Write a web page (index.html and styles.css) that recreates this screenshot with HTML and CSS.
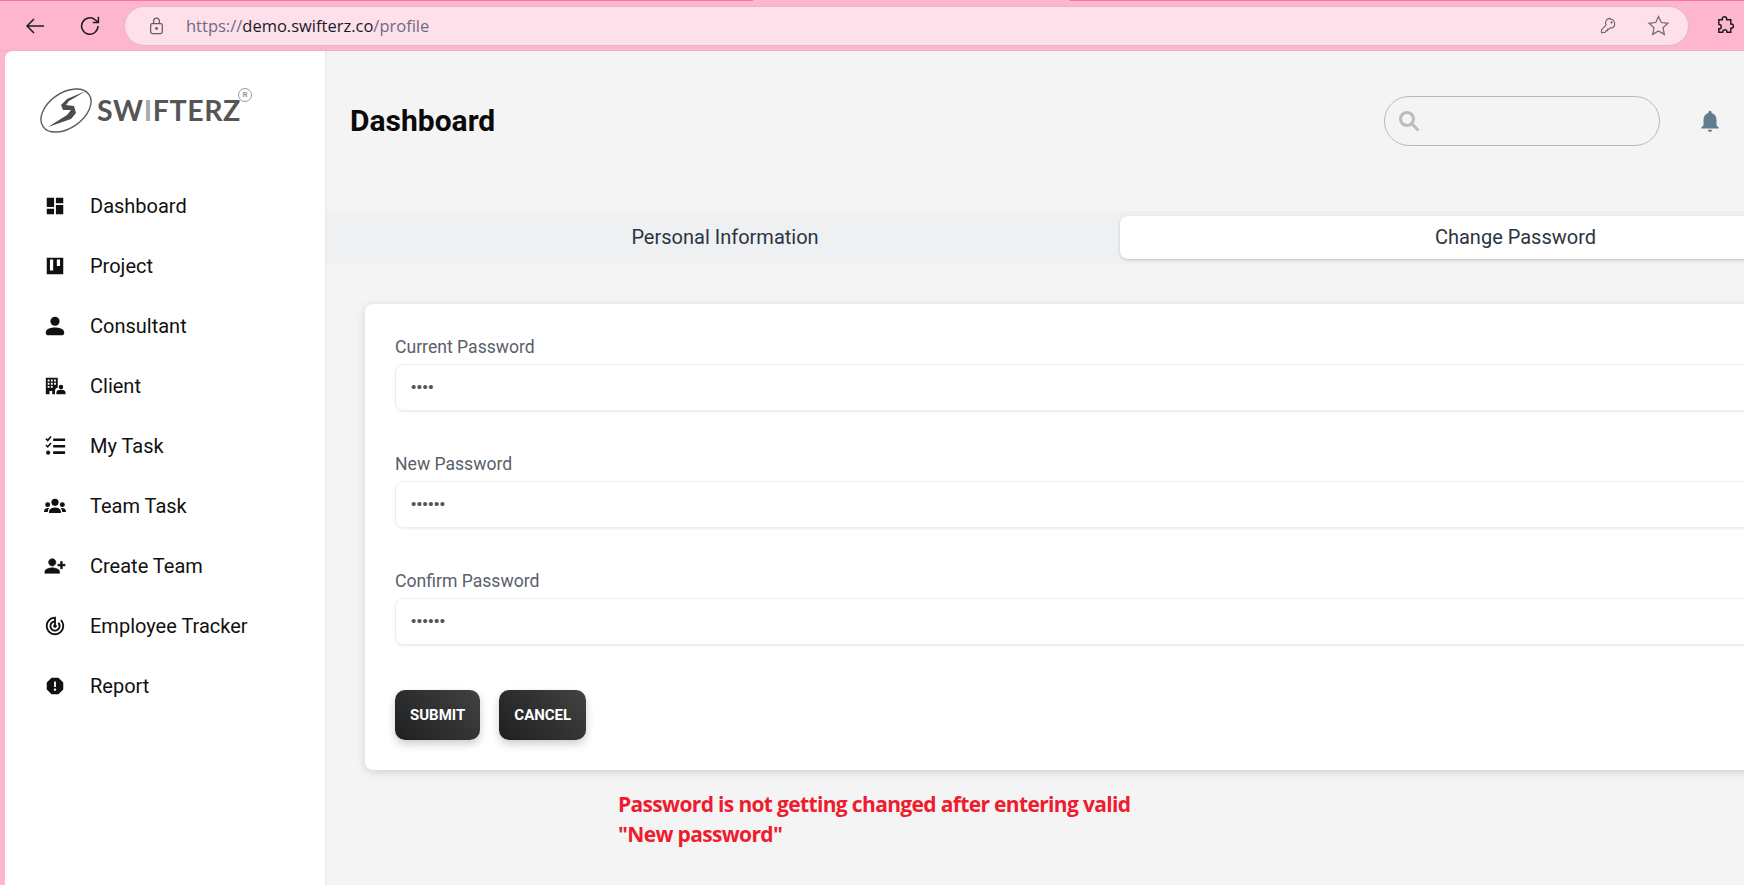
FILE: index.html
```html
<!DOCTYPE html>
<html lang="en">
<head>
    <meta charset="UTF-8">
    <meta name="viewport" content="width=device-width, initial-scale=1.0">
    <title>Swifterz - Profile</title>
    <link rel="stylesheet" href="styles.css">
</head>
<body>
    <!-- Browser toolbar -->
    <div class="browser-bar">
        <svg class="tool-icon back-icon" viewBox="0 0 24 24"><path d="M21 12H4M11 5l-7 7 7 7"/></svg>
        <svg class="tool-icon reload-icon" viewBox="0 0 24 24"><path d="M20 12a8.2 8.2 0 1 1-2.6-6L20 8.2M20.4 2.8v5.6h-5.6"/></svg>
        <div class="url-bar">
            <svg class="lock-icon" viewBox="0 0 18 22"><rect x="2" y="8" width="14" height="12" rx="2"/><path d="M5.5 8V5a3.5 3.5 0 0 1 7 0v3"/><circle cx="9" cy="14" r="1"/></svg>
            <span class="url-text">https://<b>demo.swifterz.co</b>/profile</span>
            <svg class="url-icon key-icon" viewBox="0 0 20 20"><path d="M12.5 2.5a5 5 0 0 1 1.6 9.7l-1.6-.2-1.4 1.5H9.5v1.6H8l-1 1.9-4.2.6.1-3.5 5-5.2a5 5 0 0 1 4.6-7.4z"/><circle cx="14" cy="6" r=".6"/></svg>
            <svg class="url-icon star-icon" viewBox="0 0 24 24"><path d="M12 2.5l2.9 6.4 7 .8-5.2 4.7 1.4 6.9-6.1-3.5-6.1 3.5 1.4-6.9-5.2-4.7 7-.8z"/></svg>
        </div>
        <svg class="tool-icon puzzle-icon" viewBox="0 0 24 24"><path d="M9.5 4.5a2.5 2.5 0 0 1 5 0v.8h4.7v4.9h.5a2.5 2.5 0 0 1 0 5h-.5v4.5h-4.5v-.5a2.3 2.3 0 0 0-4.6 0v.5H5.5v-3.9h.3a2.5 2.5 0 0 0 0-5h-.3V5.3h4z"/></svg>
    </div>

    <div class="app">
        <aside class="sidebar">
            <div class="logo">
                <svg class="logo-mark" viewBox="-1 -1 52 45">
                    <ellipse cx="25" cy="21.5" rx="28" ry="17.5" transform="rotate(-35 25 21.5)"/>
                    <path class="logo-bolt" d="M45 2L26 10 20 16 22 21 30 21 26 26 7 38 30 30 35 24 33 17 25 16 28 12z"/>
                </svg>
                <span class="logo-name">SW<i>I</i>FTERZ</span>
                <span class="logo-reg">R</span>
            </div>
            <nav class="menu">
                <a class="menu-item"><svg viewBox="0 0 24 24"><path d="M3 13h8V3H3v10zm0 8h8v-6H3v6zm10 0h8V11h-8v10zm0-18v6h8V3h-8z"/></svg>Dashboard</a>
                <a class="menu-item"><svg viewBox="0 0 24 24"><path fill-rule="evenodd" d="M3 3h18v18H3zM6.5 5v12H10V5zM14 5v7h3.5V5z"/></svg>Project</a>
                <a class="menu-item"><svg viewBox="0 0 24 24"><circle cx="12" cy="6.8" r="5"/><path d="M2 20v-1.5c0-3.8 6.5-5 10-5s10 1.2 10 5V20c0 1.2-.8 2-2 2H4c-1.200 0-2-.8-2-2z"/></svg>Consultant</a>
                <a class="menu-item"><svg viewBox="0 0 24 24"><path fill-rule="evenodd" d="M2 3h13v10.500c-2 .5-3 2-3 3.500v4H9v-3.500H6V21H2zM4 5v2h2V5zM7.500 5v2h2V5zM11 5v2h2V5zM4 8.500v2h2v-2zM7.500 8.500v2h2v-2zM11 8.500v2h2v-2zM4 12v2h2v-2zM7.500 12v2h2v-2z"/><circle cx="18.500" cy="13" r="2.500"/><path d="M13.500 21v-2c0-2 3-2.800 5-2.800s5 .8 5 2.800v2z"/></svg>Client</a>
                <a class="menu-item"><svg viewBox="0 0 24 24"><path d="M10 3.800h13v2.800H10zM10 10.800h13v2.800H10zM10 17.800h13v2.800H10z"/><path d="M1.500 4.500l1.300-1.100 1.200 1.300L7 1.200l1.300 1.100-4.200 5zM1.500 11.500l1.300-1.100 1.200 1.300L7 8.200l1.300 1.100-4.200 5z"/><circle cx="4.500" cy="19.300" r="2.300"/></svg>My Task</a>
                <a class="menu-item"><svg viewBox="0 0 24 24"><circle cx="12" cy="8" r="3.900"/><circle cx="4" cy="10.500" r="2.700"/><circle cx="20" cy="10.500" r="2.700"/><path d="M5.500 19.500v-1.300c0-3 3.500-4.500 6.500-4.500s6.500 1.500 6.500 4.500v1.300z"/><path d="M0 18.500v-.8c0-2 2-3.500 4-3.500.6 0 1.200.1 1.700.3-1 1-1.500 2.200-1.500 3.600v.4zM24 18.500v-.8c0-2-2-3.500-4-3.500-.6 0-1.200.1-1.700.3 1 1 1.500 2.200 1.500 3.600v.4z"/></svg>Team Task</a>
                <a class="menu-item"><svg class="heavy" viewBox="0 0 24 24"><path d="M9 12c2.210 0 4-1.790 4-4s-1.790-4-4-4-4 1.790-4 4 1.790 4 4 4zm9-2V7h2v3h3v2h-3v3h-2v-3h-3v-2h3zM9 14c-2.670 0-8 1.340-8 4v2h16v-2c0-2.660-5.330-4-8-4z"/></svg>Create Team</a>
                <a class="menu-item"><svg viewBox="0 0 24 24"><path d="M19.070 4.930l-1.410 1.410C19.100 7.790 20 9.790 20 12c0 4.420-3.580 8-8 8s-8-3.580-8-8c0-4.080 3.050-7.440 7-7.930v2.020C8.160 6.570 6 9.030 6 12c0 3.310 2.690 6 6 6s6-2.690 6-6c0-1.660-.670-3.160-1.760-4.240l-1.410 1.410C15.550 9.900 16 10.900 16 12c0 2.210-1.790 4-4 4s-4-1.790-4-4c0-1.860 1.280-3.410 3-3.860v2.140c-.6.350-1 .980-1 1.720 0 1.100.9 2 2 2s2-.9 2-2c0-.740-.4-1.380-1-1.720V2h-1C6.480 2 2 6.480 2 12s4.480 10 10 10 10-4.480 10-10c0-2.760-1.120-5.260-2.930-7.070z"/></svg>Employee Tracker</a>
                <a class="menu-item"><svg viewBox="0 0 24 24"><path d="M15.730 3H8.270L3 8.270v7.460L8.270 21h7.460L21 15.730V8.270L15.730 3zM12 17.300c-.720 0-1.300-.580-1.300-1.300 0-.720.580-1.300 1.300-1.300.720 0 1.300.580 1.300 1.300 0 .720-.580 1.300-1.300 1.300zm1-4.300h-2V7h2v6z"/></svg>Report</a>
            </nav>
        </aside>

        <main class="content">
            <header class="top-row">
                <h1>Dashboard</h1>
                <div class="search-box">
                    <svg viewBox="0 0 24 24"><circle cx="10" cy="10" r="6.500"/><path d="M15 15l6.500 6.500"/></svg>
                </div>
                <svg class="bell" viewBox="0 0 24 24"><path d="M12 22c1.100 0 2-.9 2-2h-4c0 1.100.9 2 2 2zm6-6v-5c0-3.070-1.630-5.640-4.500-6.320V4c0-.830-.670-1.500-1.500-1.500s-1.500.670-1.500 1.500v.680C7.640 5.360 6 7.920 6 11v5l-2 2v1h16v-1l-2-2z"/></svg>
            </header>

            <div class="tabs">
                <div class="tab first">Personal Information</div>
                <div class="tab active">Change Password</div>
            </div>

            <form class="card">
                <div class="field">
                    <label>Current Password</label>
                    <div class="pass-input">••••</div>
                </div>
                <div class="field">
                    <label>New Password</label>
                    <div class="pass-input">••••••</div>
                </div>
                <div class="field">
                    <label>Confirm Password</label>
                    <div class="pass-input">••••••</div>
                </div>
                <div class="buttons">
                    <button type="button">SUBMIT</button>
                    <button type="button">CANCEL</button>
                </div>
            </form>

            <p class="note">Password is not getting changed after entering valid<br>"New password"</p>
        </main>
    </div>
</body>
</html>
```
FILE: styles.css
```css
* {
    margin: 0;
    padding: 0;
    box-sizing: border-box;
    font-family: 'Roboto', sans-serif;
}

html, body {
    height: 100%;
    overflow: hidden;
}

body {
    background: #feb6ce;
    display: flex;
    flex-direction: column;
}

/* Browser toolbar */
.browser-bar {
    height: 51px;
    flex-shrink: 0;
    display: flex;
    align-items: center;
    background: linear-gradient(to right, #fd72a3 753px, transparent 753px, transparent 1070px, #fd72a3 1070px) no-repeat top / 100% 1px;
    border-bottom: 1px solid #f6aec6;
    padding: 1px 0 0 23px;
}

.tool-icon {
    fill: none;
    stroke: #1c1c1e;
    stroke-width: 1.5;
    flex-shrink: 0;
}

.back-icon {
    width: 24px;
    height: 24px;
}

.reload-icon {
    width: 24px;
    height: 24px;
    margin-left: 31px;
}

.url-bar {
    width: 1563px;
    height: 38px;
    margin-left: 23px;
    border-radius: 19px;
    background: #fee0eb;
    box-shadow: 0 0 0 1px #e5b8c8;
    display: flex;
    align-items: center;
    padding-left: 24px;
    flex-shrink: 0;
}

.lock-icon {
    width: 15px;
    height: 20px;
    fill: none;
    stroke: #6a5a62;
    stroke-width: 1.5;
}

.url-text {
    margin-left: 22px;
    font-family: 'Open Sans', sans-serif;
    font-size: 16.5px;
    color: #6f6a80;
    flex: 1;
}

.url-text b {
    font-family: 'Open Sans', sans-serif;
    font-weight: 400;
    color: #1a1a24;
}

.url-icon {
    fill: none;
    stroke: #76686e;
    stroke-width: 1.3;
}

.key-icon {
    width: 18px;
    height: 18px;
}

.star-icon {
    width: 23px;
    height: 23px;
    margin-left: 30px;
    margin-right: 18px;
}

.puzzle-icon {
    width: 21px;
    height: 21px;
    margin-left: 26px;
    stroke-width: 1.7;
}

/* App */
.app {
    flex: 1;
    min-height: 0;
    display: flex;
    margin-left: 5px;
    background: #f4f4f4;
    border-top-left-radius: 8px;
    overflow: hidden;
}

.sidebar {
    width: 320px;
    flex-shrink: 0;
    background: #fff;
    box-shadow: 1px 0 2px rgba(0, 0, 0, 0.06);
    z-index: 1;
    padding-top: 36px;
}

.logo {
    display: flex;
    align-items: center;
    height: 46px;
    padding-left: 35px;
    position: relative;
}

.logo-mark {
    width: 52px;
    height: 45px;
    flex-shrink: 0;
}

.logo-mark ellipse {
    fill: none;
    stroke: #5b5b5b;
    stroke-width: 1.4;
}

.logo-bolt {
    fill: #4d4d4d;
}

.logo-name {
    font-family: 'Lato', sans-serif;
    font-size: 28.5px;
    font-weight: 700;
    letter-spacing: 0.6px;
    color: #555;
    margin-left: 5px;
}

.logo-name i {
    font-family: 'Lato', sans-serif;
    font-style: normal;
    color: #aaa;
}

.logo-reg {
    position: absolute;
    left: 233px;
    top: 1px;
    width: 14px;
    height: 14px;
    border: 1px solid #999;
    border-radius: 50%;
    font-size: 8px;
    line-height: 12px;
    text-align: center;
    font-weight: 700;
    color: #999;
}

.menu {
    margin-top: 43px;
}

.menu-item {
    display: flex;
    align-items: center;
    height: 60px;
    padding-left: 39px;
    font-size: 20px;
    color: #111;
}

.menu-item svg {
    width: 22px;
    height: 22px;
    margin-right: 24px;
    fill: #111;
    flex-shrink: 0;
}

.menu-item svg.heavy {
    stroke: #111;
    stroke-width: 0.6;
}

/* Main */
.content {
    flex: 1;
    min-width: 0;
    overflow: hidden;
}

.top-row {
    height: 160px;
    display: flex;
    align-items: center;
    padding: 0 0 22px 25px;
}

h1 {
    font-size: 30px;
    font-weight: 700;
    color: #0a0a0a;
    flex: 1;
}

.search-box {
    width: 276px;
    height: 50px;
    margin-top: 2px;
    border: 1px solid #abbcc6;
    border-radius: 25px;
    display: flex;
    align-items: center;
    padding-left: 12px;
}

.search-box svg {
    width: 24px;
    height: 24px;
    fill: none;
    stroke: #bcbcbc;
    stroke-width: 3;
}

.bell {
    width: 26px;
    height: 26px;
    margin: 2px 21px 0 37px;
    fill: #5f7d8c;
}

.tabs {
    width: 1590px;
    height: 53px;
    margin-left: 1px;
    display: grid;
    grid-template-columns: 794px 1fr;
    align-items: center;
    background: #eff0f2;
    border-radius: 8px;
    text-align: center;
    font-size: 20px;
    color: #2b3542;
}

.tab {
    height: 43px;
    line-height: 43px;
    border-radius: 8px;
}

.tab.first {
    padding-left: 4px;
}

.tab.active {
    background: #fff;
    padding-right: 5px;
    box-shadow: 0 1px 3px rgba(0, 0, 0, 0.2);
}

.card {
    width: 1500px;
    margin: 40px 0 0 40px;
    height: 466px;
    padding: 31px 30px 0;
    background: #fff;
    border-radius: 8px;
    box-shadow: 0 2px 8px rgba(0, 0, 0, 0.15);
}

.field {
    height: 117px;
}

.field label {
    display: block;
    font-size: 17.6px;
    line-height: 24px;
    color: #59606a;
    margin-bottom: 5px;
}

.pass-input {
    height: 47px;
    line-height: 44px;
    padding-left: 15px;
    border: 1px solid #edeef0;
    border-radius: 8px;
    box-shadow: 0 1px 2px rgba(0, 0, 0, 0.08);
    font-family: 'Liberation Sans', sans-serif;
    font-size: 15px;
    letter-spacing: 0.5px;
    color: #555;
}

.buttons {
    display: flex;
    gap: 19px;
    margin-top: 4px;
}

button {
    height: 50px;
    padding: 0 15px;
    border: none;
    border-radius: 10px;
    background: linear-gradient(45deg, #1f1f1f, #424242);
    box-shadow: 0 4px 8px rgba(0, 0, 0, 0.2);
    color: #fff;
    font-size: 15px;
    font-weight: 700;
}

.note {
    margin: 19px 0 0 293px;
    font-family: 'Open Sans', sans-serif;
    font-size: 21px;
    font-weight: 700;
    line-height: 30px;
    letter-spacing: -0.66px;
    color: #ee1c2e;
}
```
